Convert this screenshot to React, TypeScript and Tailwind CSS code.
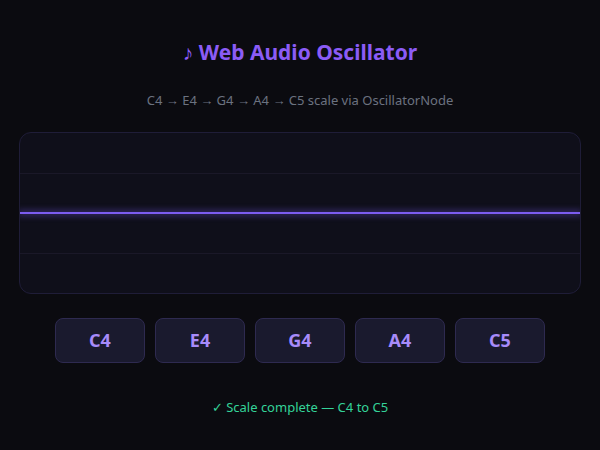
const notes = ["C4", "E4", "G4", "A4", "C5"]

export default function App() {
  return (
    <div className="flex h-[450px] w-[600px] flex-col items-center bg-[#0b0b10] font-['Noto_Sans',sans-serif]">
      <h1 className="mt-[37px] text-[21px] leading-[30px] font-bold text-[#8b5cf6]">
        ♪ Web Audio Oscillator
      </h1>
      <p className="mt-[23px] text-[13px] leading-[20px] text-[#6b7280]">
        C4 → E4 → G4 → A4 → C5 scale via OscillatorNode
      </p>

      <div className="relative mt-[22px] h-[162px] w-[562px] overflow-hidden rounded-xl border border-[#1f1d38] bg-[#0f0f1a]">
        <div className="absolute inset-x-0 top-[40px] h-px bg-[#1a1828]" />
        <div className="absolute inset-x-0 top-[120px] h-px bg-[#1a1828]" />
        <div className="absolute inset-x-0 top-[79px] h-[2px] bg-[#7c5cf0] shadow-[0_0_6px_2px_rgba(124,92,240,0.35)]" />
      </div>

      <div className="mt-[24px] flex gap-[10px]">
        {notes.map((note) => (
          <button
            key={note}
            type="button"
            className="h-[45px] w-[90px] rounded-lg border border-[#2e2a50] bg-[#1a1a2e] text-[18px] font-bold text-[#a78bfa]"
          >
            {note}
          </button>
        ))}
      </div>

      <p className="mt-[34px] text-[13px] leading-[20px] text-[#34d399]">
        ✓ Scale complete — C4 to C5
      </p>
    </div>
  )
}
